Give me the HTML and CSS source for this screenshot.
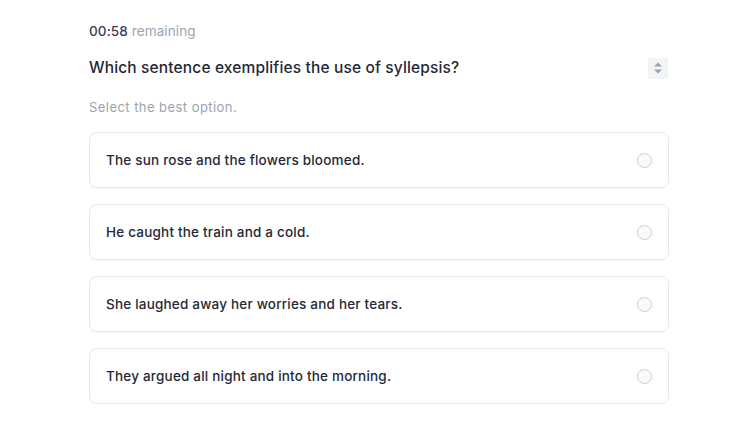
FILE: index.html
```html
<!DOCTYPE html>
<html>
<head>
<meta charset="utf-8">
<link rel="stylesheet" href="styles.css">
</head>
<body>
<div class="quiz">
  <div class="timer"><span class="time">00:58</span> <span class="rem">remaining</span></div>
  <div class="qrow">
    <div class="question">Which sentence exemplifies the use of syllepsis?</div>
    <div class="spinner">
      <svg width="10" height="14" viewBox="0 0 10 14"><path d="M5 1.5 L9 5.5 L1 5.5 Z" fill="#9ca3af"/><path d="M5 12.5 L9 8.5 L1 8.5 Z" fill="#9ca3af"/></svg>
    </div>
  </div>
  <div class="hint">Select the best option.</div>
  <div class="options">
    <label class="option"><span class="otext">The sun rose and the flowers bloomed.</span><span class="radio"></span></label>
    <label class="option"><span class="otext">He caught the train and a cold.</span><span class="radio"></span></label>
    <label class="option"><span class="otext">She laughed away her worries and her tears.</span><span class="radio"></span></label>
    <label class="option"><span class="otext">They argued all night and into the morning.</span><span class="radio"></span></label>
  </div>
</div>
</body>
</html>
```

FILE: styles.css
```css
* { box-sizing: border-box; }
body {
  margin: 0;
  background: #ffffff;
  font-family: Inter, "Noto Sans", sans-serif;
  color: #1f2937;
}
.quiz {
  width: 580px;
  margin-left: 89px;
  padding-top: 23px;
}
.timer {
  font-size: 13.5px;
  line-height: 16px;
  letter-spacing: 0.1px;
}
.time { color: #374151; font-weight: 500; }
.rem { color: #9ca3af; }
.qrow {
  margin-top: 18px;
  display: flex;
  align-items: center;
  justify-content: space-between;
  height: 22px;
}
.question {
  font-size: 15.5px;
  line-height: 22px;
  font-weight: 500;
  letter-spacing: 0.15px;
  color: #1f2937;
}
.spinner {
  width: 20px;
  height: 21px;
  background: #f3f4f6;
  display: flex;
  align-items: center;
  justify-content: center;
  margin-right: 1px;
}
.hint {
  margin-top: 20px;
  font-size: 13px;
  line-height: 16px;
  letter-spacing: 0.45px;
  color: #9ca3af;
}
.options {
  margin-top: 17px;
  display: flex;
  flex-direction: column;
  gap: 16px;
}
.option {
  height: 56px;
  border: 1px solid #e5e7eb;
  border-radius: 7px;
  display: flex;
  align-items: center;
  justify-content: space-between;
  padding: 0 16px 0 16px;
  box-shadow: 0 1px 1px rgba(0,0,0,0.03);
}
.otext {
  font-size: 13.5px;
  font-weight: 500;
  letter-spacing: 0.2px;
  color: #1f2937;
}
.radio {
  width: 15px;
  height: 15px;
  border-radius: 50%;
  border: 1.5px solid #c9ced6;
  background: #f9fafb;
}
```
